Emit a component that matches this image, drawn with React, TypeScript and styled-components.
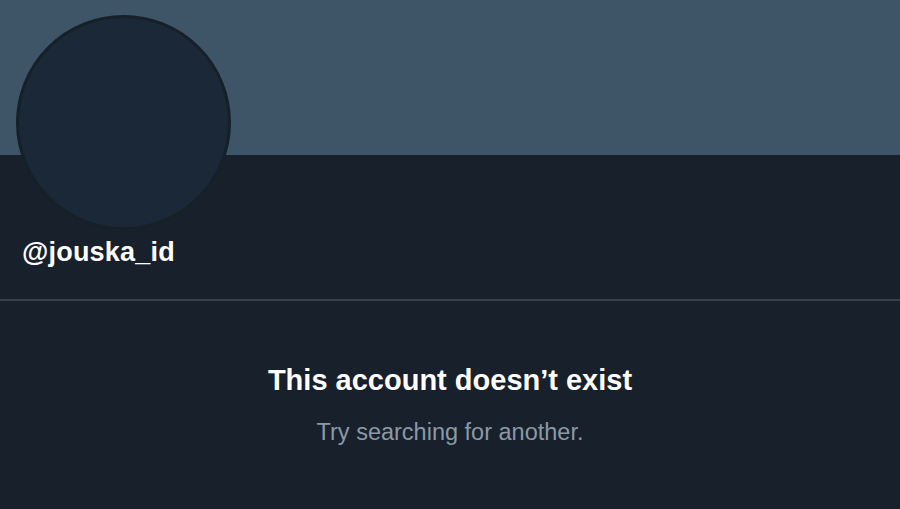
import React from "react";
import styled, { createGlobalStyle } from "styled-components";

const Global = createGlobalStyle`
  html, body { margin: 0; padding: 0; background: #18202b; }
  body { font-family: "Liberation Sans", Arial, sans-serif; }
`;

const Page = styled.div`
  width: 900px;
  height: 509px;
  overflow: hidden;
  background: #18202b;
  display: flex;
  flex-direction: column;
`;

const Banner = styled.div`
  height: 155px;
  background: #3e5467;
  flex-shrink: 0;
`;

const ProfileHeader = styled.div`
  display: flex;
  flex-direction: column;
  align-items: flex-start;
  padding: 0 0 0 16px;
  height: 146px;
  box-sizing: border-box;
  border-bottom: 2px solid #36424d;
`;

const Avatar = styled.div`
  width: 215px;
  height: 215px;
  margin-top: -140px;
  border-radius: 50%;
  box-sizing: border-box;
  border: 3px solid #152029;
  background: #1b2837;
`;

const Handle = styled.div`
  margin: 6px 0 0 6px;
  font-size: 27px;
  line-height: 32px;
  font-weight: 700;
  color: #ffffff;
  letter-spacing: 0.2px;
`;

const Empty = styled.div`
  display: flex;
  flex-direction: column;
  align-items: center;
  padding-top: 63px;
  gap: 22px;
`;

const Title = styled.div`
  font-size: 29px;
  line-height: 32px;
  font-weight: 700;
  color: #ffffff;
`;

const Subtitle = styled.div`
  font-size: 23.5px;
  line-height: 28px;
  color: #8a99a7;
`;

export default function App() {
  return (
    <>
      <Global />
      <Page>
        <Banner />
        <ProfileHeader>
          <Avatar />
          <Handle>@jouska_id</Handle>
        </ProfileHeader>
        <Empty>
          <Title>This account doesn’t exist</Title>
          <Subtitle>Try searching for another.</Subtitle>
        </Empty>
      </Page>
    </>
  );
}
